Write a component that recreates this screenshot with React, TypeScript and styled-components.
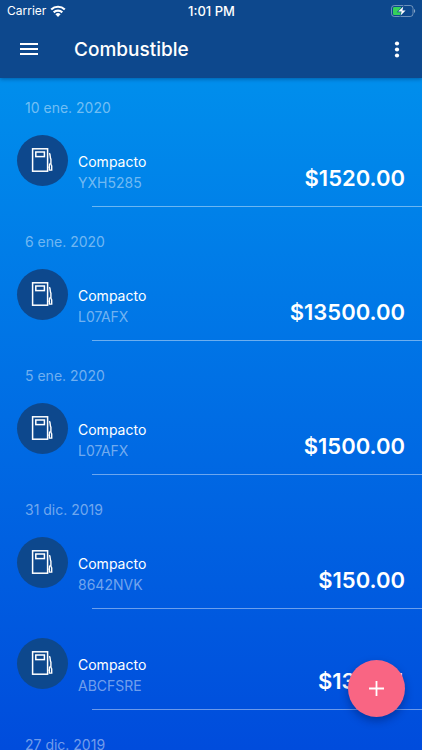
import React from "react";
import styled, { createGlobalStyle } from "styled-components";

const GlobalStyle = createGlobalStyle`
  *, *::before, *::after { box-sizing: border-box; }
  body {
    margin: 0;
    font-family: Inter, "Liberation Sans", sans-serif;
    color: #fff;
    background: #004cdc;
  }
  h1, h2, p, ul { margin: 0; padding: 0; }
  ul { list-style: none; }
  button {
    display: grid;
    place-items: center;
    padding: 0;
    border: 0;
    color: inherit;
    font: inherit;
    cursor: pointer;
  }
`;

const Screen = styled.div`
  display: flex;
  flex-direction: column;
  height: 100vh;
  overflow: hidden;
  background: linear-gradient(180deg, #0096ee 0%, #004cdc 100%);
`;

const Header = styled.header`
  flex: none;
  z-index: 1;
  background: #0d488d;
  box-shadow: 0 1px 4px rgba(0, 20, 60, 0.4);
`;

const StatusBar = styled.div`
  display: grid;
  grid-template-columns: 1fr auto 1fr;
  align-items: center;
  height: 22px;
  padding: 0 6px 0 7px;
  font-size: 12px;
  line-height: 22px;
`;

const Carrier = styled.span`
  display: flex;
  align-items: center;
  gap: 4px;
`;

const Clock = styled.time`
  font-size: 13px;
  font-weight: 500;
`;

const BatterySlot = styled.span`
  display: flex;
  justify-content: flex-end;
`;

const AppBar = styled.div`
  display: flex;
  align-items: center;
  height: 56px;
  padding: 0 5px 0 9px;
`;

const BarButton = styled.button`
  width: 40px;
  height: 40px;
  background: transparent;
`;

const Title = styled.h1`
  flex: 1;
  margin-left: 25px;
  font-size: 19px;
  font-weight: 500;
  line-height: 28px;
`;

const List = styled.main`
  flex: 1;
  min-height: 0;
  overflow-y: auto;
  scrollbar-width: none;
`;

const DayGroup = styled.section`
  padding-top: 25px;

  &:first-child {
    padding-top: 20px;
  }
`;

const DayHeading = styled.h2`
  padding-left: 25px;
  font-size: 14px;
  font-weight: 400;
  line-height: 20px;
  color: rgba(255, 255, 255, 0.45);
`;

const Entry = styled.li`
  padding-top: 17px;

  & + & {
    padding-top: 29px;
  }

  &::after {
    content: "";
    display: block;
    height: 1px;
    margin-left: 92px;
    background: rgba(255, 255, 255, 0.42);
  }
`;

const EntryBody = styled.div`
  display: flex;
  align-items: flex-start;
  height: 71px;
  padding: 0 17px 0 17px;
`;

const Avatar = styled.span`
  display: grid;
  place-items: center;
  flex: none;
  width: 51px;
  height: 51px;
  border-radius: 50%;
  background: #0d488d;
`;

const Vehicle = styled.div`
  flex: 1;
  min-width: 0;
  margin: 16px 0 0 10px;
  font-size: 14px;
  line-height: 21px;
`;

const Name = styled.p`
  font-weight: 400;
`;

const Plate = styled.p`
  color: rgba(255, 255, 255, 0.45);
`;

const Amount = styled.strong`
  margin-top: 29px;
  font-size: 22px;
  font-weight: 600;
  line-height: 28px;
`;

const AddButton = styled.button`
  position: fixed;
  right: 17px;
  bottom: 33px;
  z-index: 2;
  width: 57px;
  height: 57px;
  border-radius: 50%;
  background: #f96583;
  box-shadow: 0 4px 8px rgba(0, 20, 80, 0.4);
`;

const WifiIcon = () => (
  <svg width="16" height="12" viewBox="0 0 16 12" fill="none" stroke="#fff" strokeWidth="2.2" aria-hidden="true">
    <path d="M1.200 4.500a9.800 9.800 0 0 1 13.600 0" />
    <path d="M3.700 7.400a6.300 6.300 0 0 1 8.600 0" />
    <path d="M8 11.900 5.400 9.300a3.700 3.700 0 0 1 5.200 0z" fill="#fff" stroke="none" />
  </svg>
);

const BatteryIcon = () => (
  <svg width="25" height="12" viewBox="0 0 25 12" aria-hidden="true">
    <rect x="0.5" y="0.5" width="21.5" height="11" rx="2.8" fill="none" stroke="#fff" strokeOpacity="0.4" />
    <path d="M23 4c1.600.500 1.600 3.500 0 4z" fill="#fff" fillOpacity="0.5" />
    <path d="M3.500 2H10V10H3.500C2.500 10 2 9.500 2 8.500V3.500C2 2.500 2.500 2 3.500 2z" fill="#35d15a" />
    <path d="M12.300 1.500 7.200 6.600h3.400L9.600 10.500 14.600 5.400h-3.200z" fill="#fff" stroke="#0d488d" strokeWidth="1.2" paintOrder="stroke" />
  </svg>
);

const MenuIcon = () => (
  <svg width="20" height="14" viewBox="0 0 20 14" fill="#fff" aria-hidden="true">
    <rect x="1" y="0" width="18" height="2" />
    <rect x="1" y="5" width="18" height="2" />
    <rect x="1" y="10" width="18" height="2" />
  </svg>
);

const MoreIcon = () => (
  <svg width="6" height="18" viewBox="0 0 6 18" fill="#fff" aria-hidden="true">
    <circle cx="3" cy="2.500" r="2.1" />
    <circle cx="3" cy="8.500" r="2.1" />
    <circle cx="3" cy="14.500" r="2.1" />
  </svg>
);

const PumpIcon = () => (
  <svg
    width="23"
    height="25"
    viewBox="0 0 23 25"
    fill="none"
    stroke="#fff"
    strokeWidth="1.5"
    aria-hidden="true"
  >
    <rect x="1.600" y="0.8" width="15" height="22.400" />
    <rect x="4.800" y="4" width="8.600" height="4.600" />
    <path d="M17.400 19.300h1v2.800h2.300v-4.300l-.8-1.500v-5.200c-1-1.200-.2-3.700-1.500-5.900" strokeWidth="1.400" />
    <path d="M18.400 19.300v-2.600l1-1.500" strokeWidth="1.200" />
  </svg>
);

const PlusIcon = () => (
  <svg width="17" height="17" viewBox="0 0 17 17" stroke="#fff" strokeWidth="1.8" aria-hidden="true">
    <path d="M8.500 1v15M1 8.500h15" />
  </svg>
);

type Expense = { name: string; plate: string; amount: string };
type Day = { date: string; expenses: Expense[] };

const days: Day[] = [
  { date: "10 ene. 2020", expenses: [{ name: "Compacto", plate: "YXH5285", amount: "$1520.00" }] },
  { date: "6 ene. 2020", expenses: [{ name: "Compacto", plate: "L07AFX", amount: "$13500.00" }] },
  { date: "5 ene. 2020", expenses: [{ name: "Compacto", plate: "L07AFX", amount: "$1500.00" }] },
  {
    date: "31 dic. 2019",
    expenses: [
      { name: "Compacto", plate: "8642NVK", amount: "$150.00" },
      { name: "Compacto", plate: "ABCFSRE", amount: "$130.04" },
    ],
  },
  { date: "27 dic. 2019", expenses: [] },
];

export default function App() {
  return (
    <>
      <GlobalStyle />
      <Screen>
        <Header>
          <StatusBar>
            <Carrier>
              Carrier
              <WifiIcon />
            </Carrier>
            <Clock>1:01 PM</Clock>
            <BatterySlot>
              <BatteryIcon />
            </BatterySlot>
          </StatusBar>
          <AppBar>
            <BarButton type="button" aria-label="Menú">
              <MenuIcon />
            </BarButton>
            <Title>Combustible</Title>
            <BarButton type="button" aria-label="Más opciones">
              <MoreIcon />
            </BarButton>
          </AppBar>
        </Header>
        <List>
          {days.map((day) => (
            <DayGroup key={day.date}>
              <DayHeading>{day.date}</DayHeading>
              <ul>
                {day.expenses.map((expense) => (
                  <Entry key={expense.plate}>
                    <EntryBody>
                      <Avatar>
                        <PumpIcon />
                      </Avatar>
                      <Vehicle>
                        <Name>{expense.name}</Name>
                        <Plate>{expense.plate}</Plate>
                      </Vehicle>
                      <Amount>{expense.amount}</Amount>
                    </EntryBody>
                  </Entry>
                ))}
              </ul>
            </DayGroup>
          ))}
        </List>
        <AddButton type="button" aria-label="Agregar">
          <PlusIcon />
        </AddButton>
      </Screen>
    </>
  );
}
